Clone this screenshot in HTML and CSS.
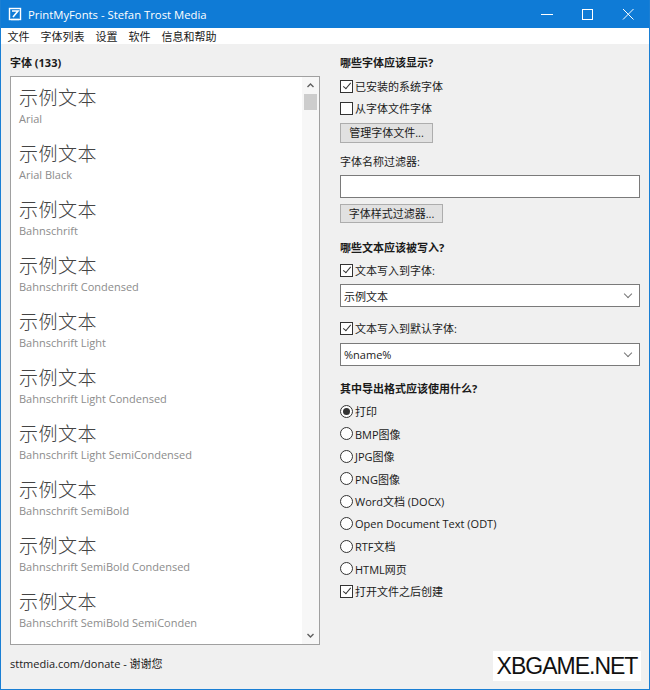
FILE: index.html
```html
<!DOCTYPE html>
<html lang="zh-CN">
<head>
  <meta charset="UTF-8" />
  <title>PrintMyFonts - Stefan Trost Media</title>
  <link rel="stylesheet" href="styles.css">
</head>
<body>
  <div class="window">
    <div class="titlebar">
      <svg class="app-icon" width="14" height="14" viewBox="0 0 14 14">
        <rect x="1.5" y="1.5" width="11" height="11" fill="none" stroke="#fff" stroke-width="1.4"/>
        <path d="M4 4h6L5 10" fill="none" stroke="#fff" stroke-width="1.6"/>
        <path d="M3 12.5h8" stroke="#fff" stroke-width="1.4"/>
      </svg>
      <span class="title">PrintMyFonts - Stefan Trost Media</span>
      <div class="controls">
        <svg width="41" height="28" viewBox="0 0 41 28"><path d="M15 14.5h12" stroke="#fff"/></svg>
        <svg width="41" height="28" viewBox="0 0 41 28"><rect x="15.5" y="9.5" width="10" height="10" fill="none" stroke="#fff"/></svg>
        <svg width="41" height="28" viewBox="0 0 41 28"><path d="M15 9l10.5 10.5M25.5 9L15 19.5" stroke="#fff"/></svg>
      </div>
    </div>

    <div class="menubar">
      <span>文件</span>
      <span>字体列表</span>
      <span>设置</span>
      <span>软件</span>
      <span>信息和帮助</span>
    </div>

    <div class="main">
      <div class="left">
        <div class="heading">字体 (133)</div>
        <div class="fontlist">
          <div class="items">
            <div class="item"><div class="sample">示例文本</div><div class="name">Arial</div></div>
            <div class="item"><div class="sample">示例文本</div><div class="name">Arial Black</div></div>
            <div class="item"><div class="sample">示例文本</div><div class="name">Bahnschrift</div></div>
            <div class="item"><div class="sample">示例文本</div><div class="name">Bahnschrift Condensed</div></div>
            <div class="item"><div class="sample">示例文本</div><div class="name">Bahnschrift Light</div></div>
            <div class="item"><div class="sample">示例文本</div><div class="name">Bahnschrift Light Condensed</div></div>
            <div class="item"><div class="sample">示例文本</div><div class="name">Bahnschrift Light SemiCondensed</div></div>
            <div class="item"><div class="sample">示例文本</div><div class="name">Bahnschrift SemiBold</div></div>
            <div class="item"><div class="sample">示例文本</div><div class="name">Bahnschrift SemiBold Condensed</div></div>
            <div class="item"><div class="sample">示例文本</div><div class="name">Bahnschrift SemiBold SemiConden</div></div>
          </div>
          <div class="scrollbar">
            <svg width="17" height="17" viewBox="0 0 17 17"><path d="M5.5 10l3-3 3 3" fill="none" stroke="#606060" stroke-width="1.4"/></svg>
            <div class="thumb"></div>
            <div class="track"></div>
            <svg width="17" height="17" viewBox="0 0 17 17"><path d="M5.5 7l3 3 3-3" fill="none" stroke="#606060" stroke-width="1.4"/></svg>
          </div>
        </div>
        <div class="footer">sttmedia.com/donate - 谢谢您</div>
      </div>

      <div class="right">
        <div class="heading">哪些字体应该显示?</div>
        <label class="opt first"><span class="box checked"></span>已安装的系统字体</label>
        <label class="opt"><span class="box"></span>从字体文件字体</label>
        <div class="btn btn-files">管理字体文件...</div>

        <div class="label">字体名称过滤器:</div>
        <div class="input"></div>
        <div class="btn btn-style">字体样式过滤器...</div>

        <div class="heading sec">哪些文本应该被写入?</div>
        <label class="opt tight"><span class="box checked"></span>文本写入到字体:</label>
        <div class="select">示例文本<span class="chev"></span></div>
        <label class="opt spaced"><span class="box checked"></span>文本写入到默认字体:</label>
        <div class="select">%name%<span class="chev"></span></div>

        <div class="heading sec2">其中导出格式应该使用什么?</div>
        <div class="radios">
          <label class="opt row"><span class="radio on"></span>打印</label>
          <label class="opt row"><span class="radio"></span>BMP图像</label>
          <label class="opt row"><span class="radio"></span>JPG图像</label>
          <label class="opt row"><span class="radio"></span>PNG图像</label>
          <label class="opt row"><span class="radio"></span>Word文档 (DOCX)</label>
          <label class="opt row"><span class="radio"></span>Open Document Text (ODT)</label>
          <label class="opt row"><span class="radio"></span>RTF文档</label>
          <label class="opt row"><span class="radio"></span>HTML网页</label>
          <label class="opt row"><span class="box checked"></span>打开文件之后创建</label>
        </div>
      </div>
    </div>

    <div class="watermark">XBGAME.NET</div>
  </div>
</body>
</html>
```

FILE: styles.css
```css
body {
  margin: 0;
  font-family: "Open Sans", "Noto Sans CJK SC", sans-serif;
  font-size: 11px;
  color: #1a1a1a;
}

.window {
  position: relative;
  width: 650px;
  height: 690px;
  box-sizing: border-box;
  background: #f0f0f0;
  border: 1px solid #1a7fd4;
  border-top: none;
  overflow: hidden;
}

.titlebar {
  display: flex;
  align-items: center;
  height: 28px;
  background: #0f7bd6;
  color: white;
  padding-left: 7px;
}

.app-icon {
  margin-right: 6px;
}

.title {
  font-size: 11.3px;
  flex: 1;
}

.controls {
  display: flex;
}

.menubar {
  display: flex;
  height: 16px;
  align-items: center;
  background: white;
  padding-left: 1px;
}

.menubar span {
  padding: 0 5.5px;
}

.main {
  display: flex;
  gap: 20px;
  padding: 10px 9px 0 9px;
}

.left {
  width: 310px;
}

.right {
  width: 300px;
  display: flex;
  flex-direction: column;
  align-items: flex-start;
}

.heading {
  height: 18px;
  line-height: 18px;
  font-weight: bold;
}

.left .heading {
  margin-bottom: 4px;
}

.fontlist {
  display: flex;
  height: 569px;
  background: white;
  border: 1px solid #a0a0a0;
  box-sizing: border-box;
}

.items {
  flex: 1;
  overflow: hidden;
  padding-top: 1px;
}

.item {
  height: 56px;
  box-sizing: border-box;
  padding: 6px 0 6px 8px;
  white-space: nowrap;
}

.sample {
  height: 26px;
  line-height: 26px;
  font-family: "Noto Sans CJK SC", sans-serif;
  font-weight: 300;
  font-size: 19px;
  color: #444;
  letter-spacing: 0.5px;
}

.name {
  height: 18px;
  line-height: 18px;
  font-size: 11px;
  color: #8c8c8c;
}

.scrollbar {
  width: 17px;
  display: flex;
  flex-direction: column;
  background: #f7f7f7;
}

.scrollbar svg {
  display: block;
}

.thumb {
  height: 16px;
  margin: 0 2px;
  background: #cdcdcd;
}

.track {
  flex: 1;
}

.footer {
  height: 18px;
  line-height: 18px;
  margin-top: 10px;
}

.opt {
  display: flex;
  align-items: center;
  height: 22px;
  white-space: nowrap;
}

.opt.first {
  margin-top: 3px;
}

.opt.tight {
  margin-top: 2px;
}

.opt.spaced {
  margin-top: 10px;
}

.box {
  width: 13px;
  height: 13px;
  box-sizing: border-box;
  border: 1px solid #333;
  background: white;
  margin-right: 2px;
  position: relative;
}

.box.checked::after {
  content: "";
  position: absolute;
  left: 3.5px;
  top: 0.5px;
  width: 3px;
  height: 7px;
  border: solid #333;
  border-width: 0 1.3px 1.3px 0;
  transform: rotate(40deg);
}

.radio {
  width: 13px;
  height: 13px;
  box-sizing: border-box;
  border: 1px solid #333;
  border-radius: 50%;
  background: white;
  margin-right: 2px;
  display: flex;
  align-items: center;
  justify-content: center;
}

.radio.on::after {
  content: "";
  width: 7px;
  height: 7px;
  border-radius: 50%;
  background: #333;
}

.btn {
  height: 20px;
  line-height: 18px;
  box-sizing: border-box;
  border: 1px solid #adadad;
  background: #e1e1e1;
  text-align: center;
  margin-top: 4px;
}

.btn-files {
  width: 93px;
}

.btn-style {
  width: 103px;
  height: 19px;
  line-height: 17px;
  margin-top: 6px;
}

.label {
  height: 18px;
  line-height: 18px;
  margin-top: 10px;
}

.input {
  width: 300px;
  height: 23px;
  box-sizing: border-box;
  margin-top: 4px;
  background: white;
  border: 1px solid #7a7a7a;
}

.select {
  display: flex;
  align-items: center;
  justify-content: space-between;
  width: 300px;
  height: 23px;
  box-sizing: border-box;
  margin-top: 3px;
  padding: 0 8px 0 3px;
  background: white;
  border: 1px solid #7a7a7a;
}

.chev {
  width: 5px;
  height: 5px;
  border: solid #777;
  border-width: 0 1px 1px 0;
  transform: rotate(45deg);
  margin-top: -3px;
}

.opt.spaced + .select {
  margin-top: 4px;
}

.heading.sec {
  margin-top: 16px;
}

.heading.sec2 {
  margin-top: 14px;
}

.radios {
  margin-top: 2px;
}

.opt.row {
  height: 22.5px;
}

.watermark {
  position: absolute;
  left: 492px;
  top: 651px;
  width: 148px;
  height: 30px;
  background: white;
  color: #111;
  font-family: "Liberation Sans", sans-serif;
  font-size: 23px;
  letter-spacing: -1px;
  line-height: 30px;
  text-align: center;
}
```
